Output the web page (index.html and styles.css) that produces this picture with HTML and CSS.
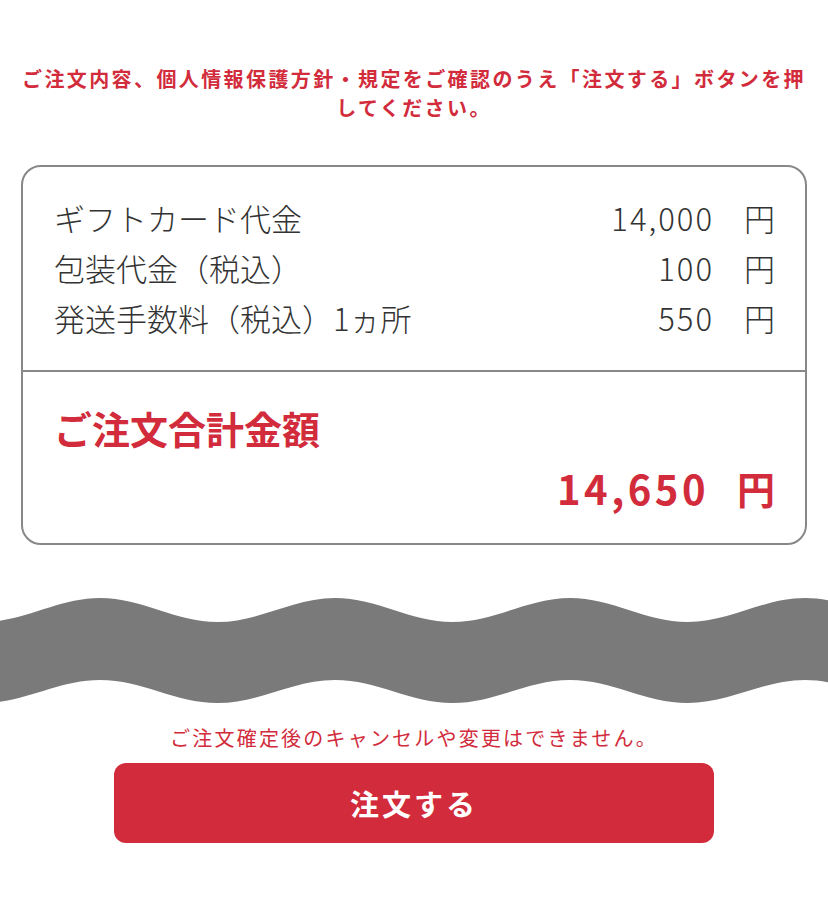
FILE: index.html
```html
<!DOCTYPE html>
<html lang="ja">

<head>
    <meta charset="UTF-8">
    <title>ご注文内容の確認</title>
    <link rel="stylesheet" href="styles.css">
</head>

<body>
    <p class="notice">ご注文内容、個人情報保護方針・規定をご確認のうえ「注文する」ボタンを押してください。</p>

    <div class="summary">
        <div class="summary-rows">
            <div class="row">
                <span class="label">ギフトカード代金</span>
                <span class="price"><span class="amount">14,000</span><span class="yen">円</span></span>
            </div>
            <div class="row">
                <span class="label">包装代金（税込）</span>
                <span class="price"><span class="amount">100</span><span class="yen">円</span></span>
            </div>
            <div class="row">
                <span class="label">発送手数料（税込）1ヵ所</span>
                <span class="price"><span class="amount">550</span><span class="yen">円</span></span>
            </div>
        </div>
        <div class="summary-total">
            <div class="total-label">ご注文合計金額</div>
            <div class="total-price"><span class="amount">14,650</span><span class="yen">円</span></div>
        </div>
    </div>

    <svg class="wave" viewBox="0 0 828 110" preserveAspectRatio="none">
        <path fill="#7a7a7a" d="M-17.5,26 C24.5,26 58,2 100,2 S175.5,26 217.5,26 S293,2 335,2 S410.5,26 452.5,26 S528,2 570,2 S645.5,26 687.5,26 S763,2 805,2 S880.5,26 922.5,26 L922.5,107 C880.5,107 847,84 805,84 S729.5,107 687.5,107 S612,84 570,84 S494.5,107 452.5,107 S377,84 335,84 S259.5,107 217.5,107 S142,84 100,84 S24.5,107 -17.5,107 Z" />
    </svg>

    <div class="order-area">
        <p class="caution">ご注文確定後のキャンセルや変更はできません。</p>
        <button class="order-btn">注文する</button>
    </div>
</body>

</html>
```

FILE: styles.css
```css
body {
    font-family: "Noto Sans CJK JP", sans-serif;
    background-color: #fff;
    color: #333;
    margin: 0;
    padding: 0;
}

.notice {
    margin: 0;
    padding: 64px 16px 0;
    color: #d22c3c;
    font-size: 20px;
    font-weight: bold;
    line-height: 29px;
    letter-spacing: 2.4px;
    text-align: center;
}

.summary {
    margin: 43px 21px 0;
    border: 2px solid #888;
    border-radius: 20px;
}

.summary-rows {
    padding: 25px 30px 28px 31px;
}

.row {
    display: flex;
    justify-content: space-between;
    align-items: center;
    height: 50px;
    font-size: 31px;
    font-weight: 300;
    color: #333;
}

.price {
    display: flex;
    align-items: center;
}

.row .amount {
    letter-spacing: 2px;
}

.yen {
    margin-left: 30px;
}

.summary-total {
    border-top: 2px solid #888;
    padding: 31px 30px 30px 31px;
    color: #d22c3c;
    font-weight: bold;
}

.total-label {
    font-size: 38px;
    line-height: 50px;
}

.total-price {
    margin-top: 10px;
    display: flex;
    justify-content: flex-end;
    align-items: center;
    font-size: 38px;
    line-height: 50px;
}

.total-price .amount {
    font-size: 40px;
    letter-spacing: 3.5px;
}

.total-price .yen {
    margin-left: 28px;
}

.wave {
    display: block;
    width: 100%;
    height: 110px;
    margin-top: 51px;
}

.order-area {
    display: flex;
    flex-direction: column;
    align-items: center;
}

.caution {
    margin: 17px 0 0;
    color: #d22c3c;
    font-size: 20px;
    line-height: 29px;
    letter-spacing: 2.2px;
}

.order-btn {
    margin-top: 11px;
    width: 600px;
    height: 80px;
    background-color: #d22c3c;
    color: #fff;
    border: none;
    border-radius: 12px;
    font-family: inherit;
    font-size: 29px;
    font-weight: bold;
    letter-spacing: 3px;
    cursor: pointer;
}
```
